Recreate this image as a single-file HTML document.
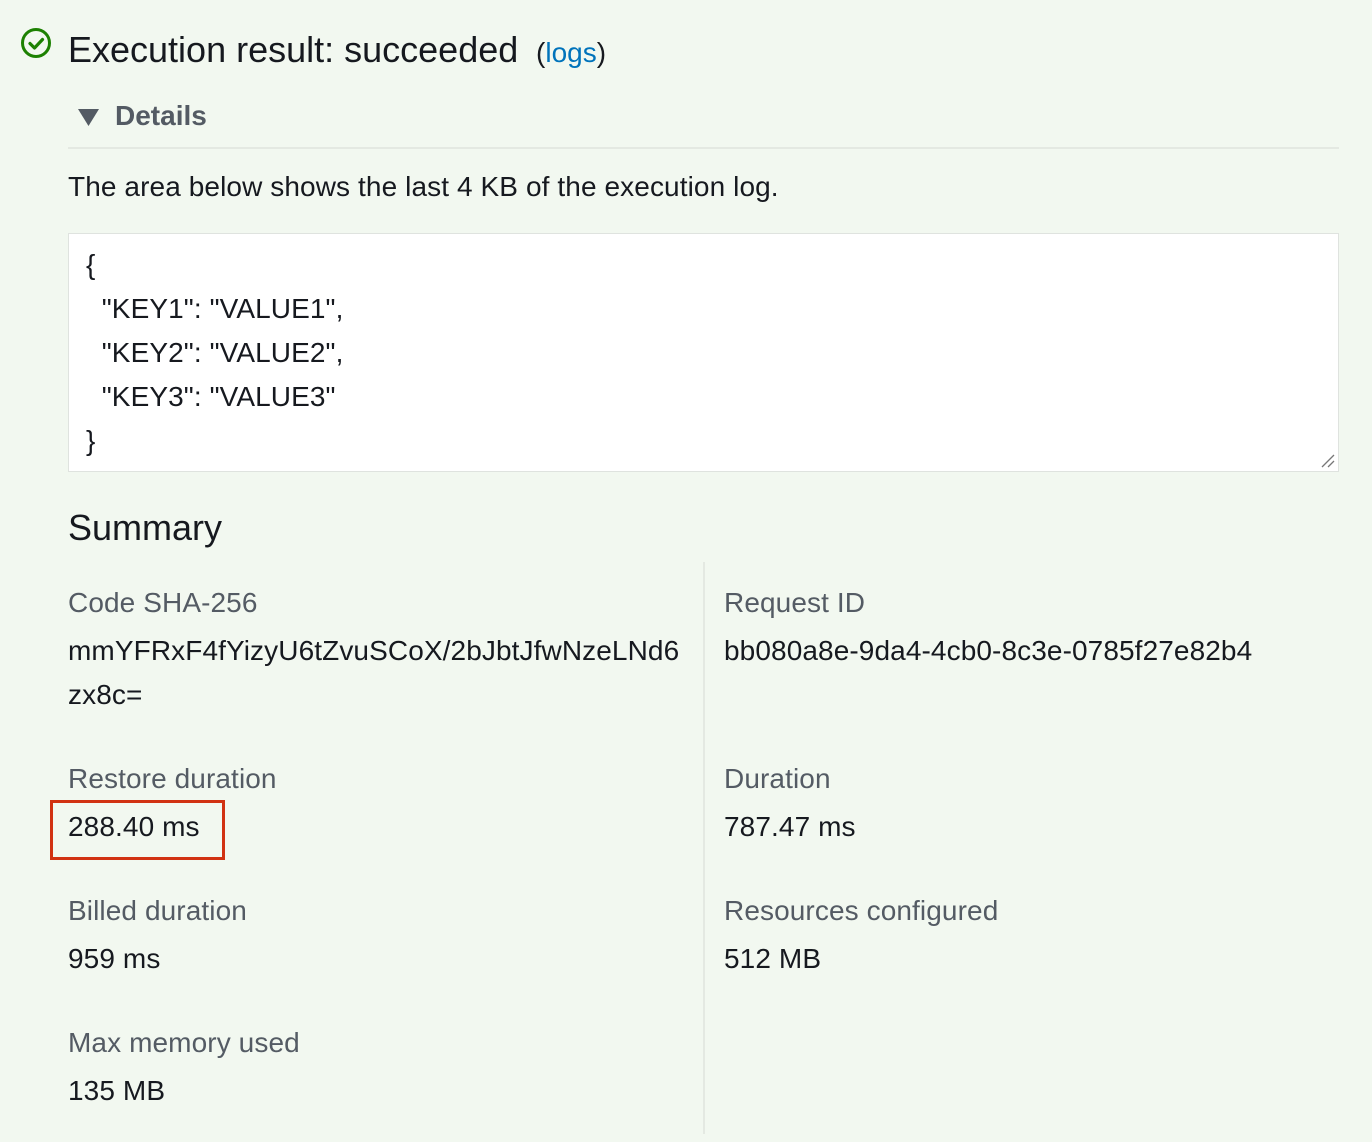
<!DOCTYPE html>
<html><head><meta charset="utf-8"><style>
body{margin:0;width:1372px;height:1142px;background:#f2f8f0;font-family:"Liberation Sans",sans-serif;color:#16191f;position:relative;overflow:hidden}
.a{position:absolute;white-space:nowrap}
.lab{color:#545b64;font-size:28px;letter-spacing:0.1px}
.val{font-size:28px;letter-spacing:0.1px}
</style></head><body>
<svg class="a" style="left:20px;top:27px" width="32" height="32" viewBox="0 0 32 32"><circle cx="16" cy="16" r="13.5" fill="none" stroke="#1d8102" stroke-width="3"/><path d="M10 16.5l4.5 4.5 8-8.5" fill="none" stroke="#1d8102" stroke-width="3.2" stroke-linecap="round" stroke-linejoin="round"/></svg>
<div class="a" style="left:68px;top:29px;font-size:36px">Execution result: succeeded <span style="font-size:28px">&nbsp;(<span style="color:#0073bb">logs</span>)</span></div>
<svg class="a" style="left:78px;top:109px" width="22" height="18"><path d="M0 0h21L10.5 17z" fill="#545b64"/></svg>
<div class="a" style="left:115px;top:100px;font-size:28px;font-weight:bold;color:#545b64">Details</div>
<div class="a" style="left:68px;top:147px;width:1271px;height:2px;background:#e4e9e2"></div>
<div class="a val" style="left:68px;top:171px">The area below shows the last 4 KB of the execution log.</div>
<div class="a" style="left:68px;top:233px;width:1269px;height:237px;background:#fff;border:1px solid #dfe3df"></div>
<div class="a val" style="left:86px;top:243px;line-height:44px;white-space:pre">{
  "KEY1": "VALUE1",
  "KEY2": "VALUE2",
  "KEY3": "VALUE3"
}</div>
<svg class="a" style="left:1320px;top:453px" width="16" height="16"><path d="M2 14L14 2M8 14l6-6" stroke="#777" stroke-width="1.3"/></svg>
<div class="a" style="left:68px;top:507px;font-size:36px">Summary</div>
<div class="a" style="left:703px;top:562px;width:2px;height:572px;background:#e4e9e2"></div>
<div class="a lab" style="left:68px;top:587px">Code SHA-256</div>
<div class="a val" style="left:68px;top:629px;line-height:44px">mmYFRxF4fYizyU6tZvuSCoX/2bJbtJfwNzeLNd6<br>zx8c=</div>
<div class="a lab" style="left:724px;top:587px">Request ID</div>
<div class="a val" style="left:724px;top:635px">bb080a8e-9da4-4cb0-8c3e-0785f27e82b4</div>
<div class="a lab" style="left:68px;top:763px">Restore duration</div>
<div class="a" style="left:50px;top:800px;width:169px;height:54px;border:3px solid #d13212"></div>
<div class="a val" style="left:68px;top:811px">288.40 ms</div>
<div class="a lab" style="left:724px;top:763px">Duration</div>
<div class="a val" style="left:724px;top:811px">787.47 ms</div>
<div class="a lab" style="left:68px;top:895px">Billed duration</div>
<div class="a val" style="left:68px;top:943px">959 ms</div>
<div class="a lab" style="left:724px;top:895px">Resources configured</div>
<div class="a val" style="left:724px;top:943px">512 MB</div>
<div class="a lab" style="left:68px;top:1027px">Max memory used</div>
<div class="a val" style="left:68px;top:1075px">135 MB</div>
</body></html>
